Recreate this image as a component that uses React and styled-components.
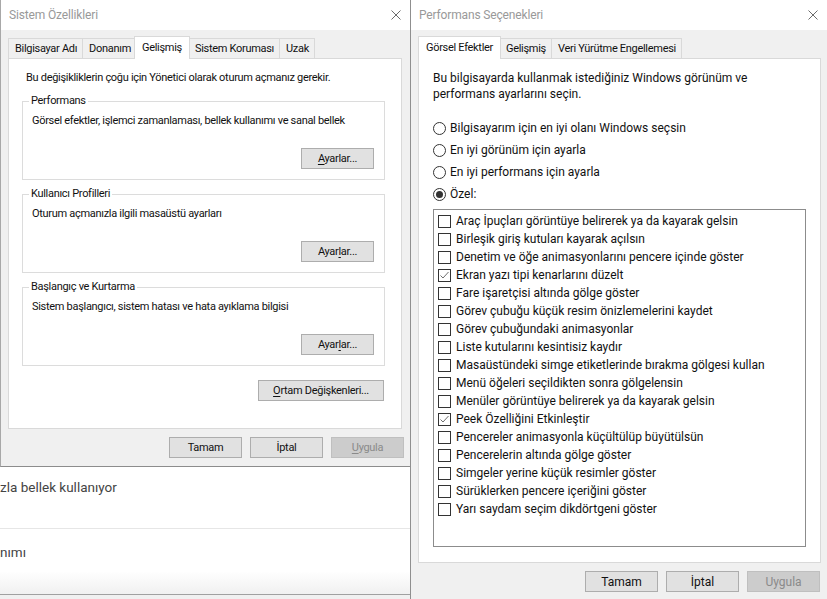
import React from "react"
import styled, { createGlobalStyle } from "styled-components"

const GlobalStyle = createGlobalStyle`
  html, body {
    margin: 0;
    padding: 0;
  }
  body {
    width: 827px;
    height: 599px;
    overflow: hidden;
    background: #f0f0f0;
    color: #111;
    font-family: Roboto, "Liberation Sans", Arial, sans-serif;
    font-size: 11px;
  }
  * {
    box-sizing: border-box;
  }
`

const systemTabs = ["Bilgisayar Adı", "Donanım", "Gelişmiş", "Sistem Koruması", "Uzak"]
const perfTabs = ["Görsel Efektler", "Gelişmiş", "Veri Yürütme Engellemesi"]

const groups = [
  {
    title: "Performans",
    text: "Görsel efektler, işlemci zamanlaması, bellek kullanımı ve sanal bellek",
    button: (
      <>
        <u>A</u>yarlar...
      </>
    ),
  },
  {
    title: "Kullanıcı Profilleri",
    text: "Oturum açmanızla ilgili masaüstü ayarları",
    button: (
      <>
        Ayar<u>l</u>ar...
      </>
    ),
  },
  {
    title: "Başlangıç ve Kurtarma",
    text: "Sistem başlangıcı, sistem hatası ve hata ayıklama bilgisi",
    button: (
      <>
        Ayar<u>l</u>ar...
      </>
    ),
  },
]

const radios = [
  { label: "Bilgisayarım için en iyi olanı Windows seçsin", checked: false },
  { label: "En iyi görünüm için ayarla", checked: false },
  { label: "En iyi performans için ayarla", checked: false },
  { label: "Özel:", checked: true },
]

const effects = [
  { label: "Araç İpuçları görüntüye belirerek ya da kayarak gelsin" },
  { label: "Birleşik giriş kutuları kayarak açılsın" },
  { label: "Denetim ve öğe animasyonlarını pencere içinde göster" },
  { label: "Ekran yazı tipi kenarlarını düzelt", checked: true },
  { label: "Fare işaretçisi altında gölge göster" },
  { label: "Görev çubuğu küçük resim önizlemelerini kaydet" },
  { label: "Görev çubuğundaki animasyonlar" },
  { label: "Liste kutularını kesintisiz kaydır" },
  { label: "Masaüstündeki simge etiketlerinde bırakma gölgesi kullan" },
  { label: "Menü öğeleri seçildikten sonra gölgelensin" },
  { label: "Menüler görüntüye belirerek ya da kayarak gelsin" },
  { label: "Peek Özelliğini Etkinleştir", checked: true },
  { label: "Pencereler animasyonla küçültülüp büyütülsün" },
  { label: "Pencerelerin altında gölge göster" },
  { label: "Simgeler yerine küçük resimler göster" },
  { label: "Sürüklerken pencere içeriğini göster" },
  { label: "Yarı saydam seçim dikdörtgeni göster" },
]

const CloseIcon = () => (
  <svg width="10" height="10" viewBox="0 0 10 10">
    <path d="M0.5 0.5 L9.5 9.5 M9.5 0.5 L0.5 9.5" stroke="#6b6b6b" strokeWidth="1" fill="none" />
  </svg>
)

const CheckMark = () => (
  <svg width="11" height="11" viewBox="0 0 11 11">
    <polyline points="1.5,5.5 4,8 9.5,2" stroke="#6e6e6e" strokeWidth="1" fill="none" />
  </svg>
)

const App = () => {
  return (
    <>
      <GlobalStyle />
      <Screen>
        <LeftColumn>
          <Window $height={467} $bottomBorder $size={11} $spacing={-0.3}>
            <TitleBar>
              <Title>Sistem Özellikleri</Title>
              <Close>
                <CloseIcon />
              </Close>
            </TitleBar>
            <Body $right={8}>
              <TabStrip>
                {systemTabs.map((t) => (
                  <Tab key={t} $active={t === "Gelişmiş"}>
                    {t}
                  </Tab>
                ))}
              </TabStrip>
              <Panel $height={371} $padding="0 16px 0 13px">
                <Note>Bu değişikliklerin çoğu için Yönetici olarak oturum açmanız gerekir.</Note>
                {groups.map((g, i) => (
                  <GroupBox key={g.title} $first={i === 0}>
                    <Legend>{g.title}</Legend>
                    <Line>{g.text}</Line>
                    <ButtonRow $top={20}>
                      <Button>{g.button}</Button>
                    </ButtonRow>
                  </GroupBox>
                ))}
                <ButtonRow $top={14} $right={1}>
                  <Button $width={126}>
                    <u>O</u>rtam Değişkenleri...
                  </Button>
                </ButtonRow>
              </Panel>
              <ButtonRow $top={8} $right={-2}>
                <Button>Tamam</Button>
                <Button>İptal</Button>
                <Button disabled>
                  <u>U</u>ygula
                </Button>
              </ButtonRow>
            </Body>
          </Window>
          <BehindWindow>
            <BehindRow $top={12} $height={62} $divider>
              zla bellek kullanıyor
            </BehindRow>
            <BehindRow $top={15}>nımı</BehindRow>
          </BehindWindow>
        </LeftColumn>

        <Window $grow $size={12} $spacing={0}>
          <TitleBar>
            <Title>Performans Seçenekleri</Title>
            <Close>
              <CloseIcon />
            </Close>
          </TitleBar>
          <Body $right={6}>
            <TabStrip>
              {perfTabs.map((t, i) => (
                <Tab key={t} $active={i === 0} $first={i === 0}>
                  {t}
                </Tab>
              ))}
            </TabStrip>
            <Panel $height={505} $padding="0 14px">
              <Intro>
                Bu bilgisayarda kullanmak istediğiniz Windows görünüm ve
                <br />
                performans ayarlarını seçin.
              </Intro>
              <RadioList>
                {radios.map((r) => (
                  <RadioRow key={r.label}>
                    <RadioCircle $checked={r.checked} />
                    {r.label}
                  </RadioRow>
                ))}
              </RadioList>
              <ListBox>
                {effects.map((e) => (
                  <CheckRow key={e.label}>
                    <CheckBox>{e.checked && <CheckMark />}</CheckBox>
                    {e.label}
                  </CheckRow>
                ))}
              </ListBox>
            </Panel>
            <ButtonRow $top={8} $right={1}>
              <Button>Tamam</Button>
              <Button>İptal</Button>
              <Button disabled>Uygula</Button>
            </ButtonRow>
          </Body>
        </Window>
      </Screen>
    </>
  )
}

export default App

const Screen = styled.div`
  display: flex;
  width: 827px;
  height: 599px;
`

const LeftColumn = styled.div`
  flex: none;
  width: 410px;
  display: flex;
  flex-direction: column;
`

const Window = styled.section`
  display: flex;
  flex-direction: column;
  background: #f0f0f0;
  font-size: ${(p) => p.$size}px;
  letter-spacing: ${(p) => p.$spacing}px;
  border-left: 1px solid ${(p) => (p.$grow ? "#8f8f8f" : "#a8a8a8")};
  ${(p) => p.$height && `height: ${p.$height}px; flex: none;`}
  ${(p) => p.$grow && "flex: 1;"}
  ${(p) => p.$bottomBorder && "border-bottom: 1px solid #8c8c8c;"}
`

const TitleBar = styled.header`
  flex: none;
  height: 30px;
  background: #fff;
  display: flex;
  align-items: center;
  justify-content: space-between;
  padding: 0 9px 1px 8px;
`

const Title = styled.span`
  font-size: 12px;
  letter-spacing: -0.15px;
  color: #999;
`

const Close = styled.span`
  display: flex;
  width: 10px;
  height: 10px;
`

const Body = styled.div`
  flex: 1;
  display: flex;
  flex-direction: column;
  padding: 6px ${(p) => p.$right}px 0 7px;
`

const TabStrip = styled.div`
  position: relative;
  z-index: 1;
  display: flex;
  align-items: flex-start;
  height: 23px;
  margin-bottom: -1px;
`

const Tab = styled.div`
  position: relative;
  height: ${(p) => (p.$active ? "23px" : "20px")};
  margin-top: ${(p) => (p.$active ? "0" : "2px")};
  margin-left: ${(p) => (p.$active && !p.$first ? "-2px" : "0")};
  margin-right: ${(p) => (p.$active ? "-2px" : "-1px")};
  padding: ${(p) => (p.$active ? "1px 7px 0" : "0 5px 0 6px")};
  font-size: 11px;
  letter-spacing: -0.3px;
  line-height: 19px;
  border: 1px solid #d9d9d9;
  border-bottom: none;
  background: ${(p) => (p.$active ? "#fff" : "#f0f0f0")};
  z-index: ${(p) => (p.$active ? 2 : 0)};
  white-space: nowrap;
`

const Panel = styled.div`
  flex: none;
  height: ${(p) => p.$height}px;
  display: flex;
  flex-direction: column;
  padding: ${(p) => p.$padding};
  background: #fff;
  border: 1px solid #d9d9d9;
`

const Note = styled.p`
  margin: 12px 0 0 4px;
  line-height: 14px;
`

const GroupBox = styled.div`
  position: relative;
  margin-top: ${(p) => (p.$first ? "16px" : "14px")};
  padding: 12px 10px 10px 9px;
  border: 1px solid #dcdcdc;
`

const Legend = styled.span`
  position: absolute;
  top: -8px;
  left: 6px;
  padding: 0 2px;
  line-height: 14px;
  background: #fff;
`

const Line = styled.div`
  line-height: 14px;
`

const ButtonRow = styled.div`
  display: flex;
  justify-content: flex-end;
  gap: 8px;
  margin-top: ${(p) => p.$top}px;
  margin-right: ${(p) => p.$right || 0}px;
`

const Button = styled.button`
  width: ${(p) => p.$width || 73}px;
  height: 21px;
  padding: 0;
  font: inherit;
  font-weight: 400;
  letter-spacing: inherit;
  color: ${(p) => (p.disabled ? "#8a8a8a" : "#111")};
  background: ${(p) => (p.disabled ? "#cccccc" : "#e1e1e1")};
  border: 1px solid ${(p) => (p.disabled ? "#bfbfbf" : "#adadad")};
  border-radius: 0;

  u {
    text-underline-offset: 2px;
  }
`

const BehindWindow = styled.div`
  flex: 1;
  display: flex;
  flex-direction: column;
  background: linear-gradient(#fff 0, #fff 104px, #f1f1f1 126px);
  border-bottom: 1px solid #a0a0a0;
  margin-bottom: 4px;
  font-size: 13.5px;
  color: #444;
`

const BehindRow = styled.div`
  padding-top: ${(p) => p.$top}px;
  line-height: 16px;
  ${(p) => p.$height && `height: ${p.$height}px;`}
  ${(p) => p.$divider && "border-bottom: 1px solid #e6e6e6;"}
  white-space: nowrap;
`

const Intro = styled.p`
  margin: 11px 0 0;
  line-height: 16px;
`

const RadioList = styled.div`
  margin-top: 15px;
  display: flex;
  flex-direction: column;
`

const RadioRow = styled.div`
  display: flex;
  align-items: center;
  gap: 4px;
  height: 22px;
`

const RadioCircle = styled.span`
  flex: none;
  width: 13px;
  height: 13px;
  border: 1px solid #333;
  border-radius: 50%;
  background: #fff;
  display: flex;
  align-items: center;
  justify-content: center;

  &::after {
    content: "";
    display: ${(p) => (p.$checked ? "block" : "none")};
    width: 7px;
    height: 7px;
    border-radius: 50%;
    background: #333;
  }
`

const ListBox = styled.div`
  margin-top: 4px;
  height: 338px;
  padding: 2px 4px 0;
  border: 1px solid #8c8c8c;
  background: #fff;
`

const CheckRow = styled.div`
  display: flex;
  align-items: center;
  gap: 5px;
  height: 18px;
  white-space: nowrap;
`

const CheckBox = styled.span`
  flex: none;
  width: 13px;
  height: 13px;
  border: 1px solid #333;
  background: #fff;
  display: flex;
  align-items: center;
  justify-content: center;
`
